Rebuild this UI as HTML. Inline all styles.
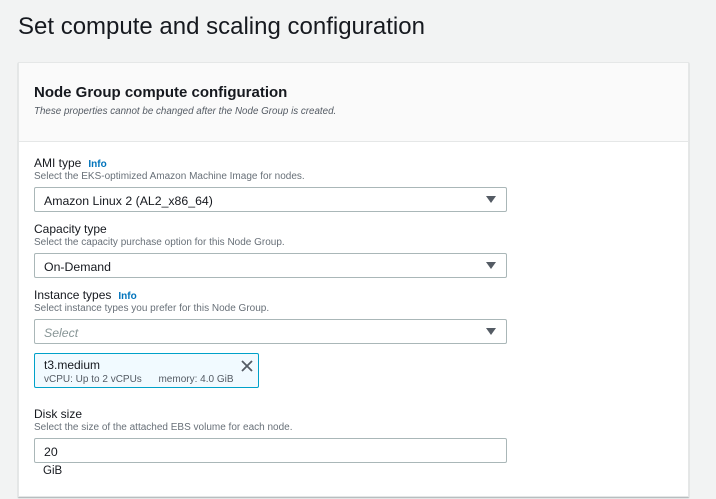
<!DOCTYPE html>
<html><head><style>
*{margin:0;padding:0;box-sizing:border-box}
body{width:716px;height:499px;background:#f2f3f3;font-family:"Liberation Sans",Arial,sans-serif;color:#16191f;position:relative;overflow:hidden}
.abs{position:absolute}
h1{position:absolute;left:18px;top:13px;font-size:24px;font-weight:normal;color:#16191f}
.card{position:absolute;left:18px;top:62px;width:671px;height:435px;background:#fff;border:1px solid #e5e7e7;box-shadow:0 1px 1px rgba(0,28,36,.3)}
.hdr{position:absolute;left:0;top:0;width:669px;height:79px;background:#fafafa;border-bottom:1px solid #e5e7e7}
.lbl{position:absolute;left:34px;font-size:12px;color:#16191f}
.lbl b{color:#0073bb;font-size:10px;margin-left:7px}
.desc{position:absolute;left:34px;font-size:10px;color:#687078}
.sel{position:absolute;left:34px;width:473px;height:25px;border:1px solid #aab7b8;border-radius:2px;background:#fff;font-size:12.3px;padding:6px 0 0 9px}
.tri{position:absolute;right:10px;top:8px;width:0;height:0;border-left:5px solid transparent;border-right:5px solid transparent;border-top:7px solid #545b64}
</style></head><body>
<h1>Set compute and scaling configuration</h1>
<div class="card"><div class="hdr"></div></div>
<div class="abs" style="left:34px;top:84px;font-size:15px;font-weight:bold">Node Group compute configuration</div>
<div class="abs" style="left:34px;top:106px;font-size:9.8px;font-style:italic;color:#545b64">These properties cannot be changed after the Node Group is created.</div>

<div class="lbl" style="top:156px">AMI type<b>Info</b></div>
<div class="desc" style="top:171px">Select the EKS-optimized Amazon Machine Image for nodes.</div>
<div class="sel" style="top:187px">Amazon Linux 2 (AL2_x86_64)<div class="tri"></div></div>

<div class="lbl" style="top:222px">Capacity type</div>
<div class="desc" style="top:237px">Select the capacity purchase option for this Node Group.</div>
<div class="sel" style="top:253px">On-Demand<div class="tri"></div></div>

<div class="lbl" style="top:288px">Instance types<b>Info</b></div>
<div class="desc" style="top:303px">Select instance types you prefer for this Node Group.</div>
<div class="sel" style="top:319px;color:#879596;font-style:italic">Select<div class="tri"></div></div>

<div class="abs" style="left:34px;top:353px;width:225px;height:35px;background:#f1faff;border:1px solid #00a1c9;border-radius:2px">
<div class="abs" style="left:9px;top:4px;font-size:12px">t3.medium</div>
<div class="abs" style="left:9px;top:20px;font-size:10px;color:#545b64">vCPU: Up to 2 vCPUs&nbsp;&nbsp;&nbsp;&nbsp;&nbsp;&nbsp;memory: 4.0 GiB</div>
<svg class="abs" style="left:206px;top:6px" width="12" height="12" viewBox="0 0 12 12"><path d="M1 1L11 11M11 1L1 11" stroke="#545b64" stroke-width="1.8"/></svg>
</div>

<div class="lbl" style="top:407px">Disk size</div>
<div class="desc" style="top:422px">Select the size of the attached EBS volume for each node.</div>
<div class="sel" style="top:438px">20</div>
<div class="abs" style="left:43px;top:465px;font-size:11.5px">GiB</div>
</body></html>
